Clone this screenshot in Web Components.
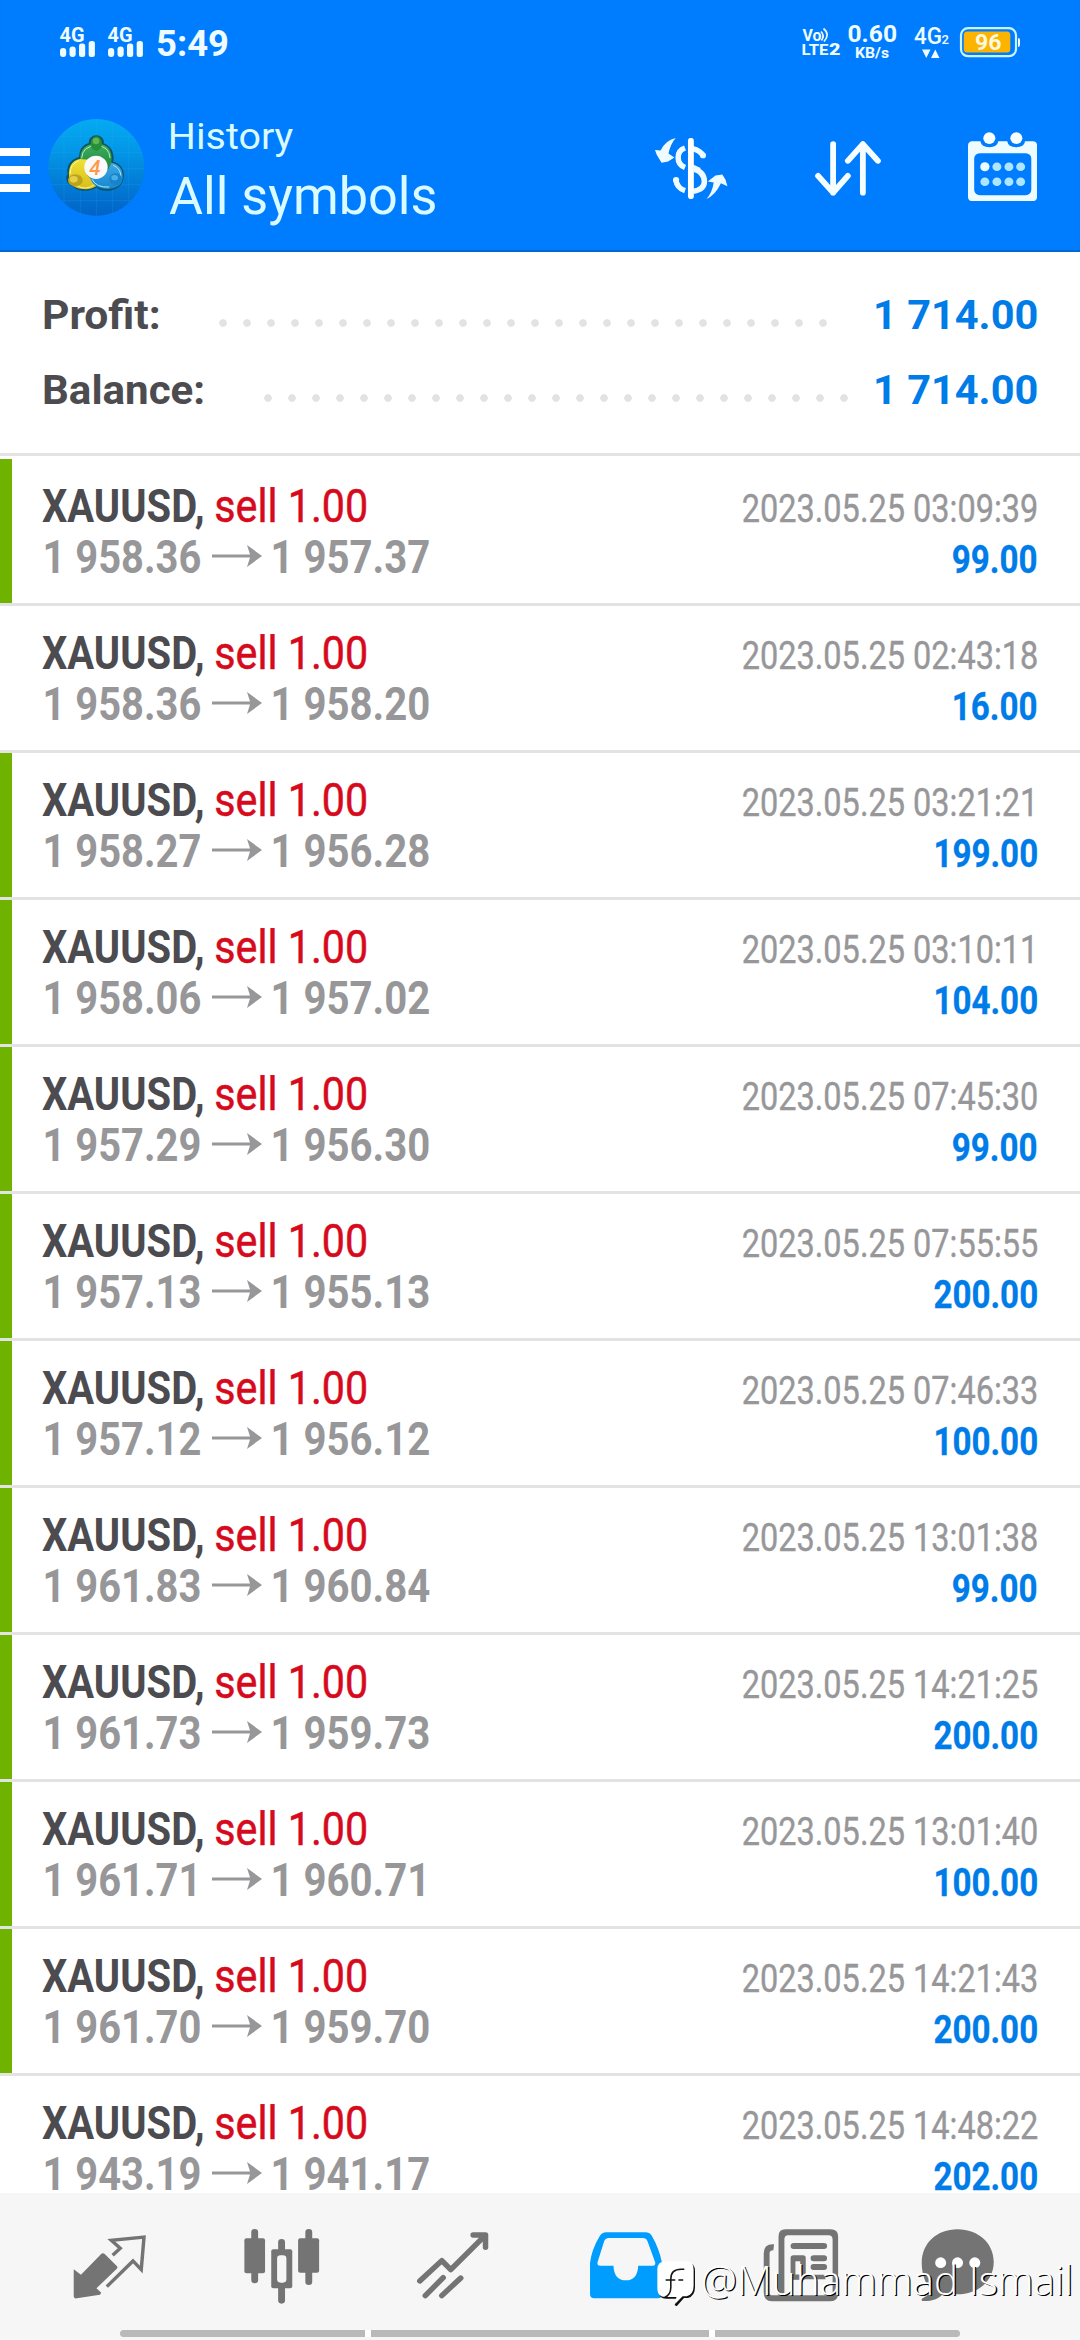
<!DOCTYPE html>
<html lang="en">
<head>
<meta charset="utf-8">
<title>History</title>
<style>
html,body{margin:0;padding:0}
body{width:1080px;height:2340px;overflow:hidden;background:#fff;font-family:Roboto,"Liberation Sans",sans-serif}
</style>
</head>
<body>
<history-app></history-app>
<script>
const define = (name, html, setup) => {
  const tpl = document.createElement('template');
  tpl.innerHTML = html;
  customElements.define(name, class extends HTMLElement {
    constructor() {
      super();
      this.attachShadow({ mode: 'open' }).appendChild(tpl.content.cloneNode(true));
    }
    connectedCallback() { if (setup) setup(this, this.shadowRoot); }
  });
};

// Text squeezed horizontally so that the ink of its sample spans a given width.
const ctx = document.createElement('canvas').getContext('2d');
define('fit-text', `
<style>
:host{display:flex;white-space:pre;flex:none}
:host([end]){justify-content:flex-end}
span{display:block;flex:none;transform-origin:0 50%}
:host([end]) span{transform-origin:100% 50%}
</style><span><slot></slot></span>`, (el, root) => {
  const cs = getComputedStyle(el);
  const ink = +el.getAttribute('ink');
  const sample = el.getAttribute('sample') || el.textContent;
  ctx.font = `${cs.fontStyle} ${cs.fontWeight} ${cs.fontSize} ${cs.fontFamily}`;
  const m = ctx.measureText(sample);
  const k = ink / (m.actualBoundingBoxLeft + m.actualBoundingBoxRight);
  const end = el.hasAttribute('end');
  const shift = end ? (m.width - m.actualBoundingBoxRight) * k : m.actualBoundingBoxLeft * k;
  el.style.width = ink + 'px';
  root.querySelector('span').style.transform = `translateX(${shift}px) scaleX(${k})`;
});

define('status-bar', `
<style>:host{display:block;height:84px}svg{display:block}text{font-family:Roboto,sans-serif;fill:#effcff}</style>
<svg width="1080" height="84" viewBox="0 0 1080 84" fill="#effcff">
  <g>
    <text x="59.5" y="42" font-size="20" font-weight="700" textLength="25" lengthAdjust="spacingAndGlyphs">4G</text>
    <rect x="60" y="48" width="6.2" height="9" rx="3"/><rect x="69.5" y="46.5" width="6.2" height="10.5" rx="3"/>
    <rect x="79" y="43.5" width="6.2" height="13.5" rx="2.5"/><rect x="88.7" y="41" width="6.2" height="16" rx="2.5"/>
  </g>
  <g transform="translate(48 0)">
    <text x="59.5" y="42" font-size="20" font-weight="700" textLength="25" lengthAdjust="spacingAndGlyphs">4G</text>
    <rect x="60" y="48" width="6.2" height="9" rx="3"/><rect x="69.5" y="46.5" width="6.2" height="10.5" rx="3"/>
    <rect x="79" y="43.5" width="6.2" height="13.5" rx="2.5"/><rect x="88.7" y="41" width="6.2" height="16" rx="2.5"/>
  </g>
  <text x="156" y="56" font-size="36.500" font-weight="700" textLength="73" lengthAdjust="spacingAndGlyphs">5:49</text>
  <text x="802.5" y="41" font-size="16" font-weight="700" textLength="19" lengthAdjust="spacingAndGlyphs">Vo</text>
  <path d="M821 31.5q4 4 .5 9M823.5 28.5q7 6 .5 13" fill="none" stroke="#effcff" stroke-width="1.7"/>
  <text x="801.5" y="55" font-size="15.5" font-weight="700" textLength="27" lengthAdjust="spacingAndGlyphs">LTE</text>
  <text x="829" y="55" font-size="16.5" font-weight="900" textLength="11.5" lengthAdjust="spacingAndGlyphs">2</text>
  <text x="847.5" y="42" font-size="23.5" font-weight="700" textLength="49.5" lengthAdjust="spacingAndGlyphs">0.60</text>
  <text x="855" y="58" font-size="14.5" font-weight="700" textLength="34" lengthAdjust="spacingAndGlyphs">KB/s</text>
  <text x="914" y="43.5" font-size="24" font-weight="500" textLength="28" lengthAdjust="spacingAndGlyphs">4G</text>
  <text x="941.5" y="43.5" font-size="13" font-weight="500">2</text>
  <path d="M922 49.5h8.5l-4.2 8.5zM931 58h8.5l-4.2-8.5z"/>
  <rect x="961" y="28.2" width="55" height="28" rx="7" fill="none" stroke="#c8f4ff" stroke-width="2.2"/>
  <rect x="963.8" y="31.5" width="46.5" height="21" rx="3.5" fill="#fcb400"/>
  <path d="M1018 38q2 0 2 2v5q0 2-2 2z"/>
  <text x="975" y="50" font-size="22.5" font-weight="700" textLength="26.5" lengthAdjust="spacingAndGlyphs" style="fill:#fff8df">96</text>
</svg>`);

define('account-logo', `
<style>:host{display:block;width:97px;height:97px}svg{display:block}</style>
<svg width="97" height="97" viewBox="0 0 291 291">
  <defs>
    <linearGradient id="bg" x2="0" y2="1"><stop stop-color="#05aaf3"/><stop offset=".3" stop-color="#0399e8"/><stop offset="1" stop-color="#0262c6"/></linearGradient>
    <linearGradient id="g" x2="0" y2="1"><stop stop-color="#3fae64"/><stop offset="1" stop-color="#1c8436"/></linearGradient>
    <linearGradient id="y" x2="0" y2="1"><stop stop-color="#f0e038"/><stop offset="1" stop-color="#d9bd1a"/></linearGradient>
    <linearGradient id="b" x2="0" y2="1"><stop stop-color="#3fa8e4"/><stop offset="1" stop-color="#1687d0"/></linearGradient>
    <clipPath id="c"><ellipse cx="145" cy="145" rx="144" ry="145"/></clipPath>
  </defs>
  <g clip-path="url(#c)">
    <rect width="291" height="291" fill="url(#bg)"/>
    <path d="M0 53h291M0 101h291M0 149h291M0 197h291M0 245h291M48 0v291M97 0v291M145 0v291M194 0v291M242 0v291" stroke="#31b5f2" stroke-opacity=".28" stroke-width="2"/>
  </g>
  <path d="M95 116q2-36 30-42c-4-30 44-30 40 0 28 10 33 38 28 55 27 8 36 28 30 55-10 32-58 36-77 18-22 16-60 14-70-4-20-2-22-26-14-32-6-22 5-42 33-50z" fill="#14603f" stroke="#0d5468" stroke-width="5"/>
  <path d="M96 122q0-48 50-48 51 1 44 57l-14 25-50-28z" fill="url(#g)"/>
  <path d="M101 118q2-37 44-38 39 1 41 37" fill="none" stroke="#b6edb2" stroke-width="3"/>
  <path d="M96 120q-37 8-33 54 0 36 52 37 25-3 33-13l-30-29 3-47z" fill="url(#y)"/>
  <path d="M93 125q-28 10-26 40M85 199q28 18 55-3" fill="none" stroke="#fff599" stroke-width="3"/>
  <path d="M190 131q36 6 34 47-4 30-44 32-48 0-56-41l50-6z" fill="url(#b)"/>
  <path d="M195 138q27 13 23 39M132 181q14 26 52 23" fill="none" stroke="#b1e7ff" stroke-width="3"/>
  <ellipse cx="145" cy="74" rx="17" ry="22" fill="#268f39"/><ellipse cx="144" cy="66" rx="10" ry="10" fill="#77c65d" opacity=".7"/>
  <ellipse cx="82" cy="184" rx="22" ry="18" fill="#bda31a"/><ellipse cx="77" cy="181" rx="12" ry="10" fill="#efd955" opacity=".8"/>
  <ellipse cx="203" cy="181" rx="19" ry="18" fill="#1684cd"/><ellipse cx="200" cy="176" rx="10" ry="8" fill="#58b9ee" opacity=".8"/>
  <circle cx="144" cy="145" r="35" fill="#fafafa"/>
  <text x="124" y="167" font-family="Roboto,sans-serif" font-size="62" font-style="italic" font-weight="500" fill="#ff9a4d" textLength="34" lengthAdjust="spacingAndGlyphs">4</text>
</svg>`);

define('app-header', `
<style>
:host{display:flex;height:168px;align-items:flex-start}
svg{display:block;flex:none}
.menu{display:flex;flex-direction:column;gap:10px;width:30px;padding-top:64px}
.menu i{height:8px;background:#fdffff}
account-logo{margin:35px 0 0 18px}
.titles{display:flex;flex-direction:column;margin-left:24px;color:#d9fbff;width:287px;flex:none}
.a{font-size:37.500px;line-height:48px;margin:28px 0 0 2px}
.b{font-size:51px;line-height:62px;margin-top:6px}
.s1{margin:53.500px 0 0 199px}.s2{margin:56.500px 0 0 87px}.s3{margin:47.500px 0 0 87px}
</style>
<div class="menu"><i></i><i></i><i></i></div>
<account-logo></account-logo>
<div class="titles"><fit-text class="a" ink="122.5">History</fit-text><fit-text class="b" ink="266">All symbols</fit-text></div>
<svg class="s1" width="72.5" height="61" viewBox="331 413 210 182" preserveAspectRatio="none">
  <path d="M391 413q-27 5-44 37l-16-1 5 14 14 24 19-4 18-12-17-12q6-28 21-46z" fill="#effcff"/>
  <path d="M480 595q26-12 42-47l19 9-6-20-9-15-20 3-22 18 17 3q-4 30-21 49z" fill="#effcff"/>
  <path d="M471 467q-9-17-31-22M418 443q-20 7-20 28 0 22 20 30M444 506q30 9 30 37 0 24-32 29M391 537q4 26 27 33" fill="none" stroke="#effcff" stroke-width="16"/>
  <circle cx="470" cy="465" r="8.500" fill="#effcff"/><circle cx="392" cy="538" r="9" fill="#effcff"/>
  <path d="M435 421v166" stroke="#fff" stroke-width="17" stroke-linecap="round"/>
  <path d="M440 499l20 10" stroke="#effcff" stroke-width="14"/>
</svg>
<svg class="s2" width="66" height="55" viewBox="792 422 193 164" preserveAspectRatio="none" fill="none" stroke="#f6feff" stroke-width="17" stroke-linecap="round" stroke-linejoin="round">
  <path d="M845 431v145M801 526l44 50 43-50M932 576V431M888 481l44-50 44 50"/>
</svg>
<svg class="s3" width="69.500" height="69.500" viewBox="1236 395 202 209" preserveAspectRatio="none">
  <path d="M1249 423h23q3 18 26 18t26-18h26q3 18 26 18t26-18h22q13 0 13 14v152q0 14-13 14h-175q-13 0-13-14V437q0-14 13-14z" fill="#effcff"/>
  <rect x="1254" y="459" width="166" height="126" rx="16" fill="#007cff"/>
  <circle cx="1298" cy="413.500" r="17.500" fill="#f7ffff"/><circle cx="1376.500" cy="413.500" r="17.500" fill="#f7ffff"/>
  <g fill="#aee6ff"><circle cx="1285" cy="499.500" r="13.500" fill="#effcff"/><circle cx="1320" cy="499.500" r="13"/><circle cx="1355" cy="499.500" r="13"/><circle cx="1389" cy="499.500" r="13"/><circle cx="1285" cy="544.500" r="13"/><circle cx="1320" cy="544.500" r="13"/><circle cx="1355" cy="544.500" r="13"/><circle cx="1389" cy="544.500" r="13"/></g>
</svg>`);

define('summary-line', `
<style>
:host{display:flex;height:75px;font-size:41.500px;font-weight:700;line-height:50px;padding:0 43.500px 0 44px;color:#4c4c50}
.d{flex:1;height:8px;margin-top:29px;background:radial-gradient(circle at 4px 4px,#e2e2e4 3.400px,transparent 4.200px) 0 0/24px 8px repeat-x}
.v{color:#007ce8}
</style>
<fit-text class="n"></fit-text><div class="d"></div><fit-text class="v" ink="160.5"></fit-text>`, (el, root) => {
  const n = root.querySelector('.n');
  n.setAttribute('ink', el.getAttribute('ink'));
  n.textContent = el.getAttribute('label');
  root.querySelector('.v').textContent = el.textContent;
  const d = root.querySelector('.d');
  d.style.marginLeft = el.getAttribute('lead') + 'px';
  d.style.marginRight = el.getAttribute('trail') + 'px';
  for (const t of root.querySelectorAll('fit-text')) t.replaceWith(t.cloneNode(true));
});

define('deal-row', `
<style>
:host{display:flex;box-sizing:border-box;height:147px;border-bottom:3px solid #e3e3e3;padding:0 43.500px 0 0}
.bar{width:12px;flex:none}
:host([tp]) .bar{background:#6fb200}
.l{padding:21px 0 0 30px;font-size:47px;line-height:51px}
.t,.p{display:flex}
.r{margin-left:auto;padding-top:24px;font-size:39.500px;line-height:51px;display:flex;flex-direction:column;align-items:flex-end;color:#97979a}
.sym{font-weight:700;color:#4b4b50}.side{margin-left:13.500px;color:#d60a1c;-webkit-text-stroke:.5px #d60a1c}
.p{font-weight:700;color:#979799;padding-left:3px;align-items:flex-start}
.p svg{margin:14px 11px 0 11px;display:block;flex:none}
.dt{-webkit-text-stroke:.4px #97979a}
.amt{font-weight:700;color:#007ce8;-webkit-text-stroke:.3px #007ce8}
</style>
<div class="bar"></div>
<div class="l">
  <div class="t"><fit-text class="sym" ink="160.5">XAUUSD,</fit-text><fit-text class="side" ink="150">sell 1.00</fit-text></div>
  <div class="p"><fit-text class="o" ink="155.5" sample="1 958.36"></fit-text>
  <svg width="50" height="22" viewBox="0 0 50 22"><path d="M0 9.600h38l-3-9.600 15 11-15 11 3-9.600H0z" fill="#979799"/></svg>
  <fit-text class="c" ink="155.500" sample="1 957.37"></fit-text></div>
</div>
<div class="r"><fit-text class="dt" ink="294" sample="2023.05.25 03:09:39" end></fit-text><fit-text class="amt" ink="83.5" sample="99.00" end></fit-text></div>`, (el, root) => {
  for (const [c, a] of [['.o', 'open'], ['.c', 'close'], ['.dt', 'time'], ['.amt', 'profit']])
    root.querySelector(c).textContent = el.getAttribute(a);
});

define('nav-bar', `
<style>
:host{display:block;height:147px;background:#f6f6f6}
.i{display:flex;height:137px;box-sizing:border-box;padding:34px 0 0 72px}
svg{display:block;flex:none;height:78.300px;fill:#747474}
.h{display:flex;justify-content:center;height:7px}
.h i{background:#b9b9b9}
.h b{width:6px;background:#fff}
.h i:nth-child(1){width:245px;border-radius:4px 0 0 4px}.h i:nth-child(3){width:338px}.h i:nth-child(5){width:245px;border-radius:0 4px 4px 0}
</style>
<div class="i">
<svg style="width:75.800px" viewBox="210 500 220 235" preserveAspectRatio="none">
  <path d="M215 627l21 16 58-61q5-6 11-1l35 36q4 4 0 8l-59 59 14 13-4 6-67 11q-9 2-9-6z"/>
  <path d="M328 585l22-21-26-24 95-10-8 98-24-26-76 77" fill="none" stroke="#747474" stroke-width="10"/>
</svg>
<svg style="width:77.500px;margin-left:95px" viewBox="705 500 225 235" preserveAspectRatio="none">
  <path d="M739 516v143M896 516v148M817 546v174" stroke="#747474" stroke-width="20" stroke-linecap="round"/>
  <rect x="709" y="534" width="60" height="105" rx="6"/><rect x="865" y="534" width="61" height="103" rx="6"/>
  <rect x="787" y="567" width="61" height="117" rx="6"/><rect x="804" y="585" width="27" height="82" rx="10" fill="#f6f6f6"/>
</svg>
<svg style="width:74px;margin-left:96px" viewBox="1210 500 215 235" preserveAspectRatio="none">
  <path d="M1221 662l64-61 26 27 100-103M1376 524h36v37M1237 706l52-54M1285 706l55-53" fill="none" stroke="#747474" stroke-width="16" stroke-linecap="round" stroke-linejoin="round"/>
</svg>
<svg style="width:74px;margin-left:98.800px" viewBox="144 500 215 235" preserveAspectRatio="none">
  <path d="M195 516h112q15 0 21 13 20 36 28 78v94q0 13-12 13H159q-12 0-12-13v-94q5-40 27-78 7-13 21-13z" fill="#009dff"/>
  <path d="M202 533h98q10 0 14 10l22 62q3 11-7 11h-42q-2 44-36 44t-36-44h-38q-11 0-8-11l19-62q4-10 14-10z" fill="#f6f6f6"/>
</svg>
<svg style="width:77.500px;margin-left:98.600px" viewBox="642 500 225 235" preserveAspectRatio="none">
  <path d="M677 552q-30-2-30 27v117q0 27 24 27h170q22 0 22-24V528q0-21-22-21H710q-20 0-20 21v177h-20q-6 0-6-9V579q0-9 11-9z"/>
  <path d="M718 525h117q12 0 12 13v167H707V538q0-13 11-13z" fill="#f6f6f6"/>
  <path d="M734 557h88M792 594h30M792 620h30" stroke="#747474" stroke-width="18" stroke-linecap="round"/>
  <rect x="725" y="585" width="44" height="73" rx="8"/><rect x="739" y="603" width="14" height="40" fill="#f6f6f6"/><path d="M726 650h100" stroke="#747474" stroke-width="13"/>
</svg>
<svg style="width:75.800px;margin-left:80.500px" viewBox="1104 500 220 235" preserveAspectRatio="none">
  <path d="M1213 507c60 0 105 42 105 98 0 55-43 97-105 97-16 0-30-3-40-5-12 19-36 26-62 25-4-3-3-6 2-9 14-6 20-15 23-26-18-18-27-48-27-79 0-59 44-101 104-101z"/>
  <g fill="#fff"><circle cx="1164" cy="607" r="16"/><circle cx="1213" cy="607" r="16"/><circle cx="1263" cy="607" r="16"/></g>
</svg>
</div>
<div class="h"><i></i><b></b><i></i><b></b><i></i></div>`);

// Author credit floating over the navigation bar.
define('photo-credit', `
<style>
:host{position:absolute;left:657px;top:2261px;display:flex;color:#fff;font-family:"Open Sans","Noto Sans",sans-serif;font-weight:300;font-size:41px;line-height:46px}
fit-text{margin:-5px 0 0 8px;text-shadow:1.300px 1.300px .6px #000}
svg{display:block;overflow:visible}
</style>
<svg width="38" height="45" viewBox="342 603 110 135" preserveAspectRatio="none">
  <path d="M372 609h60q20 0 20 25v48q0 26-20 32h-12l-21 25-6-4 8-19h-32q-22 0-23-23v-60q0-24 26-24z" fill="#111"/>
  <path d="M368 604h60q20 0 20 25v48q0 26-20 32h-12l-21 22 3-20h-32q-22 0-23-23v-60q0-24 25-24z" fill="#fff"/>
  <path d="M363 713q19-7 19-31v-25q0-29 30-29h9M367 660h28M404 660h14" fill="none" stroke="#151515" stroke-width="4.500"/>
</svg>
<fit-text ink="367">@Muhammad Ismail</fit-text>`);

const deals = [
  ['1 958.36', '1 957.37', '03:09:39', '99.00', 1],
  ['1 958.36', '1 958.20', '02:43:18', '16.00', 0],
  ['1 958.27', '1 956.28', '03:21:21', '199.00', 1],
  ['1 958.06', '1 957.02', '03:10:11', '104.00', 1],
  ['1 957.29', '1 956.30', '07:45:30', '99.00', 1],
  ['1 957.13', '1 955.13', '07:55:55', '200.00', 1],
  ['1 957.12', '1 956.12', '07:46:33', '100.00', 1],
  ['1 961.83', '1 960.84', '13:01:38', '99.00', 1],
  ['1 961.73', '1 959.73', '14:21:25', '200.00', 1],
  ['1 961.71', '1 960.71', '13:01:40', '100.00', 1],
  ['1 961.70', '1 959.70', '14:21:43', '200.00', 1],
  ['1 943.19', '1 941.17', '14:48:22', '202.00', 0]
];

define('history-app', `
<style>
:host{display:flex;flex-direction:column;position:relative;width:1080px;height:2340px;overflow:hidden;background:#fff}
header{height:252px;background:#007cff;box-shadow:inset 0 -2px 1px #0067cf;flex:none}
.sum{box-sizing:border-box;height:204px;border-bottom:3px solid #e3e3e3;padding-top:38px;flex:none}
main{flex:1;min-height:0;padding-top:3px;overflow:hidden}
nav-bar{flex:none}
</style>
<header><status-bar></status-bar><app-header></app-header></header>
<section class="sum">
  <summary-line label="Profit:" ink="115" lead="60" trail="46">1 714.00</summary-line>
  <summary-line label="Balance:" ink="159.5" lead="60.5" trail="25">1 714.00</summary-line>
</section>
<main>${deals.map(([o, c, t, p, g]) => `<deal-row open="${o}" close="${c}" time="2023.05.25 ${t}" profit="${p}"${g ? ' tp' : ''}></deal-row>`).join('')}</main>
<nav-bar></nav-bar>
<photo-credit></photo-credit>`);
</script>
</body>
</html>
